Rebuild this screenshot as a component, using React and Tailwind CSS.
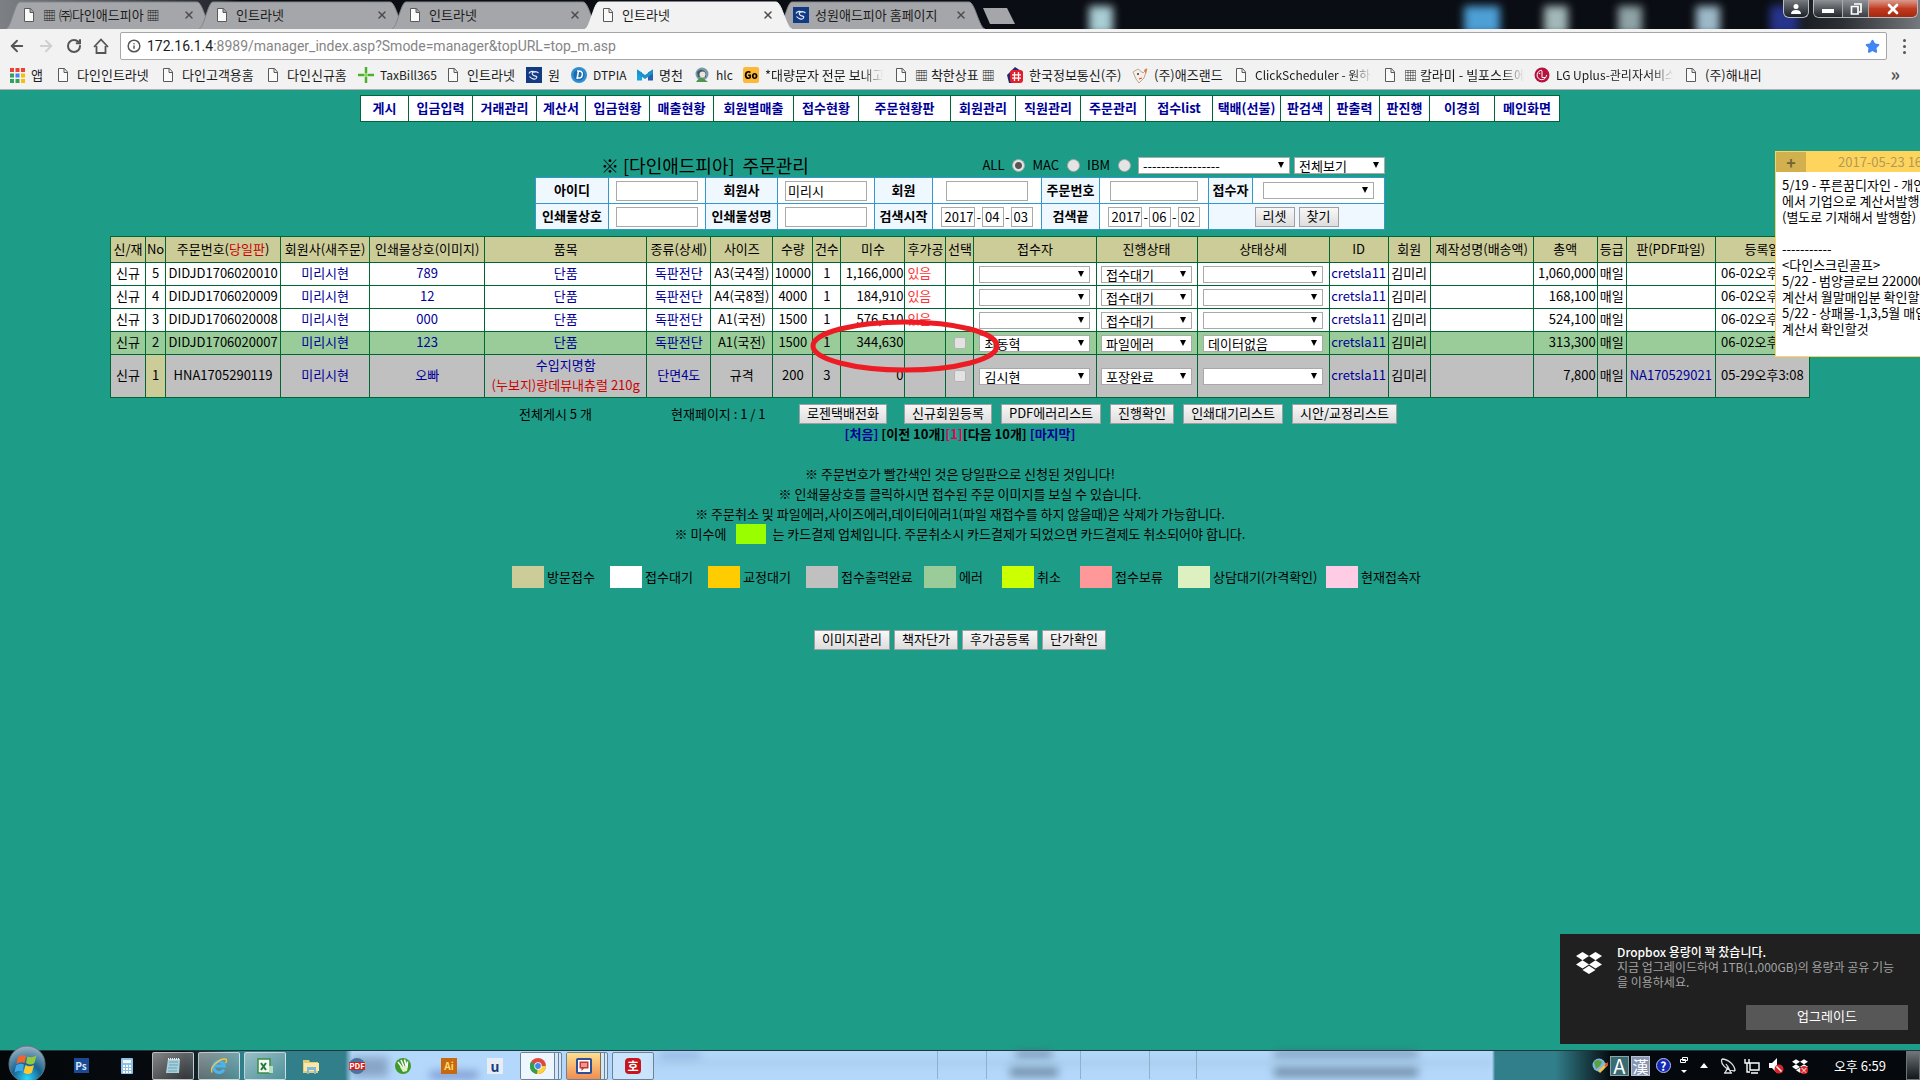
import React, { useState } from "react";
import { ArrowLeft, ArrowRight, RotateCw, Info, Star, X } from "lucide-react";
import { FaDropbox } from "react-icons/fa";

const tabs = [
  { title: '▦ ㈜다인애드피아 ▦', icon: 'doc' },
  { title: '인트라넷', icon: 'doc' },
  { title: '인트라넷', icon: 'doc' },
  { title: '인트라넷', icon: 'doc', active: true },
  { title: '성원애드피아 홈페이지', icon: 'blue' },
];

const bookmarks = [
  { title: '앱', icon: 'apps', width: 'w-[42px]' },
  { title: '다인인트라넷', icon: 'doc', width: 'w-[101px]' },
  { title: '다인고객용홈', icon: 'doc', width: 'w-[101px]' },
  { title: '다인신규홈', icon: 'doc', width: 'w-[89px]' },
  { title: 'TaxBill365', icon: 'plus', width: 'w-[83px]' },
  { title: '인트라넷', icon: 'doc', width: 'w-[77px]' },
  { title: '원', icon: 'blue', width: 'w-[41px]' },
  { title: 'DTPIA', icon: 'dt', width: 'w-[62px]' },
  { title: '명천', icon: 'm', width: 'w-[53px]' },
  { title: 'hlc', icon: 'hlc', width: 'w-[45px]' },
  { title: '*대량문자 전문 보내고', icon: 'go', width: 'w-[146px]', fade: true },
  { title: '▦ 착한상표 ▦', icon: 'doc', width: 'w-[110px]' },
  { title: '한국정보통신(주)', icon: 'hash', width: 'w-[121px]' },
  { title: '(주)애즈랜드', icon: 'az', width: 'w-[97px]' },
  { title: 'ClickScheduler - 원하는', icon: 'doc', width: 'w-[145px]', fade: true },
  { title: '▦ 칼라미 - 빌포스트에', icon: 'doc', width: 'w-[148px]', fade: true },
  { title: 'LG Uplus-관리자서비스', icon: 'lg', width: 'w-[145px]', fade: true },
  { title: '(주)해내리', icon: 'doc', width: 'w-[87px]' },
];

const menus = [
  ['게시', 'w-[48px]'], ['입금입력', 'w-[64px]'], ['거래관리', 'w-[64px]'], ['계산서', 'w-[49px]'],
  ['입금현황', 'w-[64px]'], ['매출현황', 'w-[64px]'], ['회원별매출', 'w-[80px]'], ['접수현황', 'w-[65px]'],
  ['주문현황판', 'w-[92px]'], ['회원관리', 'w-[65px]'], ['직원관리', 'w-[65px]'], ['주문관리', 'w-[65px]'],
  ['접수list', 'w-[67px]'], ['택배(선불)', 'w-[68px]'], ['판검색', 'w-[49px]'], ['판출력', 'w-[50px]'],
  ['판진행', 'w-[50px]'], ['이경희', 'w-[65px]'], ['메인화면', 'w-[65px]'],
];

const columns = [
  ['신/재', 'w-[35px]'], ['No', 'w-[20px]'], ['주문번호', 'w-[115px]'], ['회원사(새주문)', 'w-[89px]'],
  ['인쇄물상호(이미지)', 'w-[115px]'], ['품목', 'w-[162px]'], ['종류(상세)', 'w-[64px]'], ['사이즈', 'w-[62px]'],
  ['수량', 'w-[40px]'], ['건수', 'w-[28px]'], ['미수', 'w-[64px]'], ['후가공', 'w-[41px]'], ['선택', 'w-[28px]'],
  ['접수자', 'w-[122px]'], ['진행상태', 'w-[101px]'], ['상태상세', 'w-[132px]'], ['ID', 'w-[59px]'],
  ['회원', 'w-[42px]'], ['제작성명(배송액)', 'w-[103px]'], ['총액', 'w-[64px]'], ['등급', 'w-[29px]'],
  ['판(PDF파일)', 'w-[89px]'], ['등록일', 'w-[94px]'],
];

const orders = [
  { no: 5, code: 'DIDJD1706020010', name: '789', item: '단품', kind: '독판전단', size: 'A3(국4절)', qty: 10000, count: 1, due: '1,166,000', post: '있음', staff: '', state: '접수대기', detail: '', total: '1,060,000', pdf: '', date: '06-02오후6:54', bg: 'bg-white' },
  { no: 4, code: 'DIDJD1706020009', name: '12', item: '단품', kind: '독판전단', size: 'A4(국8절)', qty: 4000, count: 1, due: '184,910', post: '있음', staff: '', state: '접수대기', detail: '', total: '168,100', pdf: '', date: '06-02오후6:52', bg: 'bg-white' },
  { no: 3, code: 'DIDJD1706020008', name: '000', item: '단품', kind: '독판전단', size: 'A1(국전)', qty: 1500, count: 1, due: '576,510', post: '있음', staff: '', state: '접수대기', detail: '', total: '524,100', pdf: '', date: '06-02오후6:50', bg: 'bg-white' },
  { no: 2, code: 'DIDJD1706020007', name: '123', item: '단품', kind: '독판전단', size: 'A1(국전)', qty: 1500, count: 1, due: '344,630', post: '', check: true, staff: '최동혁', state: '파일에러', detail: '데이터없음', total: '313,300', pdf: '', date: '06-02오후6:48', bg: 'bg-[#99cc99]' },
  { no: 1, code: 'HNA1705290119', name: '오빠', item: '수입지명함', paper: '(누보지)랑데뷰내츄럴 210g', kind: '단면4도', size: '규격', qty: 200, count: 3, due: '0', post: '', check: true, staff: '김시현', state: '포장완료', detail: '', total: '7,800', pdf: 'NA170529021', date: '05-29오후3:08', bg: 'bg-[#c0c0c0]', tall: true },
];

const legend = [
  ['방문접수', 'bg-[#cccc99]', 'w-[98px]'], ['접수대기', 'bg-white', 'w-[98px]'], ['교정대기', 'bg-[#ffcc00]', 'w-[98px]'],
  ['접수출력완료', 'bg-[#c0c0c0]', 'w-[118px]'], ['에러', 'bg-[#99cc99]', 'w-[78px]'], ['취소', 'bg-[#ccff00]', 'w-[78px]'],
  ['접수보류', 'bg-[#ff9999]', 'w-[98px]'], ['상담대기(가격확인)', 'bg-[#dcf0c0]', 'w-[148px]'], ['현재접속자', 'bg-[#ffcce6]', 'w-[96px]'],
];

// 16px site icons for tabs and bookmarks
const SiteIcon = ({ name }) => {
  const shapes = {
    doc: <path d="M3.5 1.5h6l3 3.5v9.500h-9zM9 1.500v4h3.500" fill="#fafafa" stroke="#5a5a5a" />,
    apps: <g>
      <path d="M1 1h4v4H1zM6.500 1h4v4h-4zM12 1h4v4h-4z" fill="#ea4335" />
      <path d="M1 6.500h4v4H1z" fill="#34a060" /><path d="M6.500 6.500h4v4h-4z" fill="#4285f4" /><path d="M12 6.500h4v4h-4z" fill="#fbbc05" />
      <path d="M1 12h4v4H1zM6.500 12h4v4h-4z" fill="#34a060" /><path d="M12 12h4v4h-4z" fill="#fbbc05" />
    </g>,
    plus: <g><path d="M8 0v6M8 10v6M0 8h6M10 8h6" stroke="#4caf2e" strokeWidth="2.500" /><circle cx="8" cy="8" r="2" fill="#8bd45c" /></g>,
    blue: <g><rect width="16" height="16" fill="#123a82" /><path d="M12.500 6C10 3.500 5 5 6.500 7.500S12 8.500 10.500 11 5 11.500 3.500 9.500M3 6.500C4 4 8 3.500 9 5.500" fill="none" stroke="#e3ecfa" strokeWidth="1.200" /></g>,
    dt: <g><circle cx="8" cy="8" r="8" fill="#2f8fd0" /><circle cx="8" cy="8" r="5.500" fill="#1c6cb0" /><path d="M6 4h2c5 0 4 7 0 7H5.500M7.500 4 6 12" stroke="#fff" strokeWidth="1.500" fill="none" /></g>,
    m: <g><path d="M0 2.500l5 3v8H0z" fill="#17a3e0" /><path d="M11 5.500l5-3v11h-5z" fill="#2660b4" /><path d="M0 2.500l8 5.500 8-5.500v4L8 12 0 6.500z" fill="#1d92c8" /></g>,
    hlc: <g><circle cx="8" cy="7" r="6.500" fill="#7b98a8" /><path d="M3 5q5-5 9 1v4H4z" fill="#355c6e" /><circle cx="8.500" cy="7.500" r="3" fill="#f1e3cf" /><path d="M2 15q4-6 8-3l4 3z" fill="#4c9650" /></g>,
    hash: <g><path d="M8 0l8 5v8l-6 3H2L0 8z" fill="#26286e" /><rect x="3" y="3" width="13" height="13" rx="3" fill="#e2202c" /><path d="M7.500 5v9M11.500 5v9M5 7.800h9M5 11.200h9" stroke="#fff" strokeWidth="1.300" /></g>,
    az: <g><path d="M1 5l5-3 5 4 4-4-3 9-5 5-3-4z" fill="#f5efe8" stroke="#b9a896" /><path d="M12 3l3-2-1 6z" fill="#e8793a" /><circle cx="6" cy="7" r="1" fill="#333" /><path d="M7 12l3-1" stroke="#d33" /></g>,
    lg: <g><circle cx="8" cy="8" r="7.500" fill="#b5123f" /><path d="M8 4v6.500h3M12.500 8A4.700 4.700 0 1 1 8 3.300" fill="none" stroke="#fff" /><circle cx="5.500" cy="6.500" r=".8" fill="#fff" /></g>,
  };
  if (name === 'go') {
    return <span className="flex h-4 w-4 shrink-0 items-center justify-center rounded-xs bg-[#fdb933] text-[10px] leading-none font-black text-black">Go</span>;
  }
  return <svg viewBox="0 0 16 16" className="h-4 w-4 shrink-0">{shapes[name]}</svg>;
}

const Tab = ({ tab }) => (
  <div className={`relative -mr-[14px] flex h-7 w-[207px] items-center gap-1.5 pr-[18px] pl-[15px] ${tab.active ? 'z-10' : ''}`}>
    <svg viewBox="0 0 207 28" preserveAspectRatio="none" className="absolute inset-0 h-full w-full">
      <path d="M0 28C5 27 9 1 14 1H191C197 1 201 27 207 28" fill={tab.active ? '#f2f2f2' : '#a5a6a9'} stroke={tab.active ? '#f2f2f2' : '#82868c'} />
    </svg>
    <span className="relative"><SiteIcon name={tab.icon} /></span>
    <span className="relative flex-1 whitespace-nowrap">{tab.title}</span>
    <button aria-label="탭 닫기" className="relative"><X className="h-3 w-3 text-[#4d4d4d]" strokeWidth={3} /></button>
  </div>
)

const WindowButtons = () => (
  <div className="flex h-[18px] items-stretch gap-1 text-white">
    <button aria-label="사용자" className="flex w-[26px] items-center justify-center rounded-b-md border border-t-0 border-[#b9bcc0] bg-gradient-to-b from-[#777b80] to-[#1d2229]">
      <svg viewBox="0 0 12 12" className="h-3 w-3" fill="#fff"><circle cx="6" cy="3.500" r="2.500" /><path d="M1 11q0-4 5-4t5 4z" /></svg>
    </button>
    <div className="flex overflow-hidden rounded-b-md border border-t-0 border-[#b9bcc0]">
      <button aria-label="최소화" className="flex w-[29px] items-center justify-center border-r border-[#aaa] bg-gradient-to-b from-[#8f9296] to-[#23272d]"><span className="mt-1 h-1 w-3 bg-white"></span></button>
      <button aria-label="이전 크기로" className="flex w-[26px] items-center justify-center border-r border-[#aaa] bg-gradient-to-b from-[#8f9296] to-[#3b3e43]">
        <svg viewBox="0 0 12 12" className="h-3 w-3" fill="none" stroke="#fff" strokeWidth="1.700"><path d="M4 1h7v8H9" /><path d="M1.500 3.500h6.500v7.500H1.500z" /></svg>
      </button>
      <button aria-label="닫기" className="flex w-[48px] items-center justify-center bg-gradient-to-b from-[#d99b8d] via-[#c23b20] to-[#a3290f]"><X className="h-4 w-4" strokeWidth={4} /></button>
    </div>
  </div>
)

const BrowserHeader = () => (
  <header className="font-['Noto_Sans_CJK_KR',sans-serif] text-[13px] leading-4 text-[#1c1c1c]">
    {/* Tab strip over the blurred desktop */}
    <div className="relative flex h-[29px] items-start overflow-hidden bg-[linear-gradient(90deg,#7d8186_0,#24282e_220px,#0a0d13_240px,#0a0d13_92%,#2c3035_96%,#75797d)]">
      <span className="absolute top-1.5 left-[1089px] h-7 w-6 bg-[#a9cdd4] blur-xs"></span>
      <span className="absolute top-1.5 right-[420px] h-7 w-9 bg-[#4d9fd6] blur-xs"></span>
      <span className="absolute top-1.5 right-[352px] h-7 w-6 bg-[#a3b8b9] blur-xs"></span>
      <span className="absolute top-1.5 right-[278px] h-7 w-6 bg-[#8fa3a6] blur-xs"></span>
      <span className="absolute top-1.5 right-[200px] h-7 w-6 bg-[#9db9c9] blur-xs"></span>
      <span className="absolute top-1.5 right-[122px] h-7 w-7 bg-[#27348c] blur-xs"></span>
      <div className="flex pt-px pl-1.5">
        {tabs.map((tab, i) => <Tab key={i} tab={tab} />)}
      </div>
      <button aria-label="새 탭" className="mt-2 ml-3 h-4 w-8 bg-[#a5a6a9] [clip-path:polygon(0_0,75%_0,100%_100%,22%_100%)]"></button>
      <div className="relative mr-0.5 ml-auto"><WindowButtons /></div>
    </div>

    {/* Address bar */}
    <div className="flex h-[34px] items-center bg-[#f2f2f2] pr-2 pl-2 text-[#555]">
      <div className="flex w-28 items-center gap-[11px]">
        <ArrowLeft className="h-[18px] w-[18px]" strokeWidth={2.5} />
        <ArrowRight className="h-[18px] w-[18px] text-[#cfcfcf]" strokeWidth={2.5} />
        <RotateCw className="h-4 w-4" strokeWidth={3} />
        <svg viewBox="0 0 16 16" className="h-4 w-4" fill="none" stroke="#555" strokeWidth="1.800"><path d="M1 9l7-7.500L15 9M3.500 8v7h9V8" /></svg>
      </div>
      <div className="flex h-7 flex-1 items-center gap-1.5 rounded-xs border border-[#a6a6a6] bg-white px-1.5">
        <Info className="h-3.5 w-3.5 shrink-0" strokeWidth={2.5} />
        <label htmlFor="url" className="sr-only">주소</label>
        <div className="relative flex-1 font-[Roboto,sans-serif] text-sm leading-5 text-[#858585]">
          <span className="text-[#1c1c1c]">172.16.1.4</span>:8989/manager_index.asp?Smode=manager&amp;topURL=top_m.asp
          <input id="url" className="absolute inset-0 w-full bg-transparent outline-none" />
        </div>
        <Star className="h-[15px] w-[15px]" fill="#4285f4" stroke="#4285f4" />
      </div>
      <button aria-label="메뉴" className="ml-4 flex w-[9px] flex-col gap-[3px]">
        <span className="h-[3px] w-[3px] rounded-full bg-[#555]"></span>
        <span className="h-[3px] w-[3px] rounded-full bg-[#555]"></span>
        <span className="h-[3px] w-[3px] rounded-full bg-[#555]"></span>
      </button>
    </div>

    {/* Bookmarks */}
    <nav className="flex h-[27px] items-center gap-1 border-b border-[#b0b0b0] bg-[#f2f2f2] pr-5 pb-[3px] pl-[9px]">
      {bookmarks.map((b) => (
        <a key={b.title + b.width} href="#" className={`flex shrink-0 items-center gap-1.5 overflow-hidden leading-5 whitespace-nowrap ${b.width} ${b.fade ? '[mask-image:linear-gradient(90deg,#000_82%,transparent_96%)]' : ''} ${/^[A-Za-z]/.test(b.title) ? 'text-xs' : ''}`}>
          <SiteIcon name={b.icon} />
          <span>{b.title}</span>
        </a>
      ))}
      <button className="ml-auto pb-1 text-lg leading-4 font-bold text-[#555]">»</button>
    </nav>
  </header>
)

const Select = ({ label, value, width }) => (
  <span className={`relative block h-[17px] shrink-0 ${width}`}>
    <select aria-label={label} defaultValue={value} className="block h-full w-full appearance-none border border-[#a9a9a9] bg-white pl-1 text-[13px] leading-[15px] text-black outline-none">
      <option value={value}>{value}</option>
    </select>
    <svg viewBox="0 0 6 6" className="pointer-events-none absolute top-[5px] right-1.5 h-1.5 w-1.5"><path d="M0 0h6L3 6z" /></svg>
  </span>
)

const Field = ({ label, value, width }) => (
  <input aria-label={label} defaultValue={value} className={`block h-5 border border-[#a9a9a9] bg-white pl-0.5 text-[13px] leading-4 outline-none ${width}`} />
)

const Button = ({ children, className }) => (
  <button className={`h-5 shrink-0 border border-[#a0a0a0] bg-gradient-to-b from-[#f8f8f8] to-[#dddddd] pb-0.5 text-center leading-4 whitespace-nowrap text-black ${className}`}>{children}</button>
)

const DateFields = ({ label, date }) => (
  <span className="flex items-center justify-center gap-px">
    <Field label={`${label} 년`} value={date[0]} width="w-[34px]" />-
    <Field label={`${label} 월`} value={date[1]} width="w-[22px]" />-
    <Field label={`${label} 일`} value={date[2]} width="w-[22px]" />
  </span>
)

const SearchForm = () => {
  const [os, setOs] = useState('ALL');
  const th = 'h-[26px] border border-[#3399cc] bg-[#f0f8ff] p-0 pb-0.5 text-center font-bold whitespace-nowrap';
  const td = 'h-[26px] border border-[#3399cc] bg-white p-0 text-center';

  return (
    <form className="mx-auto mt-[33px] w-[850px]" onSubmit={(e) => e.preventDefault()}>
      <div className="flex h-[22px] items-center pb-0.5">
        <h1 className="flex-1 pl-[66px] text-lg leading-5 whitespace-pre">※ [다인애드피아]  주문관리</h1>
        {['ALL', 'MAC', 'IBM'].map((name) => (
          <label key={name} className="mr-[7px] flex items-center gap-2">
            {name}
            <input type="radio" name="os" checked={os === name} onChange={() => setOs(name)}
              className="h-[13px] w-[13px] appearance-none rounded-full border border-[#a5a5a5] bg-[#e4e4e4] checked:bg-[radial-gradient(#555_0_3px,#e4e4e4_4px)]" />
          </label>
        ))}
        <Select label="품목 선택" value="-----------------" width="mr-1 w-[152px]" />
        <Select label="보기" value="전체보기" width="w-[91px]" />
      </div>
      <table className="w-full table-fixed border-collapse">
        <colgroup>
          <col className="w-[73px]" /><col className="w-[97px]" /><col className="w-[72px]" /><col className="w-[97px]" />
          <col className="w-[58px]" /><col className="w-[109px]" /><col className="w-[58px]" /><col className="w-[109px]" />
          <col className="w-[44px]" /><col />
        </colgroup>
        <tbody>
          <tr>
            <th className={th}>아이디</th><td className={td}><Field label="아이디" width="mx-auto w-[82px]" /></td>
            <th className={th}>회원사</th><td className={td}><Field label="회원사" value="미리시" width="mx-auto w-[82px]" /></td>
            <th className={th}>회원</th><td className={td}><Field label="회원" width="mx-auto w-[82px]" /></td>
            <th className={th}>주문번호</th><td className={td}><Field label="주문번호" width="mx-auto w-[88px]" /></td>
            <th className={th}>접수자</th><td className={td}><Select label="접수자" value="" width="mx-auto w-[111px]" /></td>
          </tr>
          <tr>
            <th className={th}>인쇄물상호</th><td className={td}><Field label="인쇄물상호" width="mx-auto w-[82px]" /></td>
            <th className={th}>인쇄물성명</th><td className={td}><Field label="인쇄물성명" width="mx-auto w-[82px]" /></td>
            <th className={th}>검색시작</th><td className={td}><DateFields label="검색시작" date={['2017', '04', '03']} /></td>
            <th className={th}>검색끝</th><td className={td}><DateFields label="검색끝" date={['2017', '06', '02']} /></td>
            <td colSpan={2} className="border border-[#3399cc] bg-[#f0f8ff] p-0">
              <div className="flex justify-center gap-1"><Button className="w-10">리셋</Button><Button className="w-10">찾기</Button></div>
            </td>
          </tr>
        </tbody>
      </table>
    </form>
  )
}

const OrderTable = () => {
  const cell = 'border border-[#006633] p-0 pb-0.5 text-center whitespace-nowrap';
  const control = 'border border-[#006633] p-0';
  const link = 'text-[#000099]';

  return (
    <div className="relative mx-auto mt-1.5 w-[1700px]">
      <table className="w-full table-fixed border-collapse">
        <thead>
          <tr className="h-[26px] bg-[#cccc99]">
            {columns.map(([name, width]) => (
              <th key={name} className={`${cell} ${width} font-normal`}>
                {name}{name === '주문번호' && <>(<span className="text-[#cc0000]">당일판</span>)</>}
              </th>
            ))}
          </tr>
        </thead>
        <tbody>
          {orders.map((o) => (
            <tr key={o.no} className={`${o.bg} ${o.tall ? 'h-[43px]' : 'h-[23px]'}`}>
              <td className={cell}>신규</td>
              <td className={`${cell} ${o.tall ? 'bg-[#cccc99]' : ''}`}>{o.no}</td>
              <td className={cell}>{o.code}</td>
              <td className={cell}><a href="#" className={link}>미리시현</a></td>
              <td className={cell}><a href="#" className={link}>{o.name}</a></td>
              <td className={`${cell} leading-5`}>
                <a href="#" className={link}>{o.item}</a>
                {o.paper && <div className="text-[#cc0000]">{o.paper}</div>}
              </td>
              <td className={cell}><a href="#" className={link}>{o.kind}</a></td>
              <td className={cell}>{o.size}</td>
              <td className={cell}>{o.qty}</td>
              <td className={cell}>{o.count}</td>
              <td className="border border-[#006633] pr-px pb-0.5 text-right">{o.due}</td>
              <td className="border border-[#006633] pb-0.5 pl-0.5 text-left text-[#ff3333]">{o.post}</td>
              <td className={control}>
                {o.check && <input type="checkbox" aria-label={`${o.no}번 선택`} className="mx-auto block h-3 w-3 appearance-none rounded-xs border border-[#b5b5b5] bg-[#e2e2e2]" />}
              </td>
              <td className={control}><Select label="접수자" value={o.staff} width="mx-auto w-[111px]" /></td>
              <td className={control}><Select label="진행상태" value={o.state} width="mx-auto w-[91px]" /></td>
              <td className={control}><Select label="상태상세" value={o.detail} width="mx-auto w-[120px]" /></td>
              <td className={cell}><a href="#" className={link}>cretsla11</a></td>
              <td className={cell}>김미리</td>
              <td className={cell}></td>
              <td className="border border-[#006633] pr-px pb-0.5 text-right">{o.total}</td>
              <td className={cell}>매일</td>
              <td className={cell}><a href="#" className={link}>{o.pdf}</a></td>
              <td className={cell}>{o.date}</td>
            </tr>
          ))}
        </tbody>
      </table>
      {/* Red marker drawn round the unpaid amount */}
      <svg viewBox="0 0 190 54" className="pointer-events-none absolute top-[83px] left-[700px] h-[54px] w-[190px]">
        <ellipse cx="95" cy="27" rx="92" ry="24" fill="none" stroke="#ed1c24" strokeWidth="5" />
      </svg>
    </div>
  )
}

const Memo = () => (
  <aside className="absolute top-[151px] right-0 h-[206px] w-[145px] overflow-hidden border border-r-0 border-[#ffd45c] bg-white">
    <div className="flex h-5 items-center bg-[#ffd45c] whitespace-nowrap text-[#b09a58]">
      <button aria-label="메모 추가" className="mr-8 flex h-5 w-[30px] shrink-0 items-center justify-center bg-[#d1b04d] text-base font-bold text-[#6f6339]">+</button>
      2017-05-23 16:22
    </div>
    <p className="px-1.5 pt-[5px] whitespace-pre">{`5/19 - 푸른꿈디자인 - 개인
에서 기업으로 계산서발행
(별도로 기재해서 발행함)

-----------
<다인스크린골프>
5/22 - 범양글로브 220000
계산서 월말매입분 확인할
5/22 - 상패몰-1,3,5월 매입
계산서 확인할것`}</p>
  </aside>
)

const DropboxToast = () => (
  <aside className="absolute right-0 bottom-9 flex h-[110px] w-[360px] bg-[#202020] pt-2.5 text-xs leading-[15px]">
    <FaDropbox className="mt-1.5 mr-[15px] ml-4 h-[26px] w-[26px] shrink-0 text-white" />
    <div className="flex flex-1 flex-col">
      <b className="font-medium text-white">Dropbox 용량이 꽉 찼습니다.</b>
      <p className="whitespace-nowrap text-[#a3a3a3]">지금 업그레이드하여 1TB(1,000GB)의 용량과 공유 기능<br />을 이용하세요.</p>
      <button className="mt-4 mr-3 h-[25px] w-[162px] self-end bg-[#575757] pb-1 text-[13px] text-white">업그레이드</button>
    </div>
  </aside>
)

const TaskIcon = ({ name }) => {
  const icons = {
    calc: <g><rect x="2" width="12" height="16" rx="1" fill="#8fc1e6" /><path d="M4 2h8v3H4z" fill="#eef8ff" /><path d="M4 8h8M4 11h8M4 14h8" stroke="#fff" strokeWidth="2" strokeDasharray="2 1" /></g>,
    note: <g><path d="M3 1h12l-1 14H1z" fill="#a9d2de" /><path d="M4 4h9M4 7h9M3 10h9M3 13h9" stroke="#6d9fb0" /><path d="M3 1h12" stroke="#eee" strokeWidth="2" strokeDasharray="1 1" /></g>,
    ie: <g fill="none"><path d="M13 11.500A5.500 5.500 0 1 1 13.500 8H4" stroke="#49b4ee" strokeWidth="3" /><path d="M1 14.500C-2 9 10-1 15.500 1.500 16 2 15.500 4 14.500 5" stroke="#f4c63f" strokeWidth="1.500" /></g>,
    excel: <g><rect x="1" y="1" width="12" height="14" fill="#f2faf2" stroke="#3b8d45" strokeWidth="1.500" /><path d="M4 5l5 7M9 5l-5 7" stroke="#217a36" strokeWidth="2" /><path d="M12 8h4v7h-4z" fill="#b7dfb9" /></g>,
    folder: <g><path d="M0 2h6l1 2h8v11H0z" fill="#e8cb6e" /><path d="M1 5h15v8H1z" fill="#f8e9a8" /><path d="M4 16V9h9v7h-2v-4H6v4z" fill="#7db9e2" /></g>,
    corel: <g><circle cx="8" cy="8" r="8" fill="#3f9a2c" /><path d="M3 4l6 8M6 2l4 9M9.500 1.500l2 8M12.500 3.500l-.5 6" stroke="#fff" strokeWidth="1.600" /><path d="M5 9l3 5 4-1 1-5z" fill="#dff3c9" /></g>,
    chrome: <g><circle cx="8" cy="8" r="8" fill="#dd4b3e" /><path d="M8 8L1 4a8 8 0 0 0 6 12z" fill="#2ea14f" /><path d="M8 8h8a8 8 0 0 1-9 8z" fill="#fdd23c" /><circle cx="8" cy="8" r="3.700" fill="#fff" /><circle cx="8" cy="8" r="2.900" fill="#4285f4" /></g>,
    chat: <g><rect width="16" height="16" rx="2" fill="#2c4f9c" /><path d="M2 2h12v12H2z" fill="#fff" /><path d="M3.500 3.500h9v7H8l-2.500 2.500v-2.500h-2z" fill="#c9392e" /><path d="M5 6h6M5 8h6" stroke="#fff" /></g>,
  };
  return <svg viewBox="0 0 16 16" className="h-4 w-4">{icons[name]}</svg>;
}

const Taskbar = () => {
  const slot = 'flex h-7 w-[42px] shrink-0 items-center justify-center';
  const open = `${slot} rounded-xs border border-white/60 bg-gradient-to-br from-white/50 to-white/15`;

  return (
    <footer className="relative flex h-[30px] items-center border-t border-[#20363a] bg-[linear-gradient(90deg,#04070a_0,#070b0f_185px,#317f8b_240px,#317f8b_345px,#b4d8fb_352px,#b4d8fb_1492px,#317f8b_1495px,#317f8b_1555px,#05080c_1612px,#05080c)]">
      {/* Window seen through the glass */}
      <span className="absolute top-1.5 left-[352px] h-5 w-9 bg-[#6c83a5]/60 blur-xs"></span>
      <span className="absolute top-5 left-[430px] h-2 w-12 bg-[#5872b5]/60 blur-xs"></span>
      <span className="absolute top-0.5 left-[660px] h-1 w-10 bg-[#5a78b5]/60 blur-xs"></span>
      <span className="absolute top-0 left-[1016px] h-1.5 w-9 bg-[#476078]/70 blur-xs"></span>
      <span className="absolute top-4 left-[1010px] h-2.5 w-12 bg-[#476078]/60 blur-xs"></span>
      <span className="absolute top-0 left-[1274px] h-1.5 w-36 bg-[#476078]/60 blur-xs"></span>
      <span className="absolute top-4 left-[1274px] h-2.5 w-36 bg-[#476078]/60 blur-xs"></span>
      <span className="absolute top-2.5 left-[652px] h-1 w-[840px] bg-[#8fb9cf]/60 blur-xs"></span>
      <span className="absolute top-0 left-[937px] h-7 w-[50px] border-x border-[#8ab5c8]"></span>
      <span className="absolute top-0 left-[1080px] h-7 w-[70px] border-x border-[#8ab5c8]"></span>
      <span className="absolute top-0 left-[1196px] h-7 w-px bg-[#8ab5c8]"></span>

      <button aria-label="시작" className="relative -mt-1 mr-3.5 ml-2 h-[38px] w-[38px] shrink-0">
        <svg viewBox="0 0 38 38">
          <defs><radialGradient id="orb" cx=".5" cy=".9" r=".9"><stop offset="0" stopColor="#2bd6ff" /><stop offset=".45" stopColor="#17628f" /><stop offset="1" stopColor="#9fb5c2" /></radialGradient></defs>
          <circle cx="19" cy="19" r="18" fill="url(#orb)" stroke="#5d7484" />
          <path d="M10 12q4-3 8-1l-1.500 7q-4-2-8 1z" fill="#f0652e" /><path d="M19.500 11.500q4 2 9-1l-2 7.500q-4 3-8.500 0z" fill="#94c83d" />
          <path d="M8 20.500q4-3 8-1l-1.500 7q-4-2-8 1z" fill="#3fa9e8" /><path d="M17.500 20q4 2.500 8.500 0l-2 7.500q-4 3-8.500 0z" fill="#fdc72f" />
        </svg>
      </button>
      <div className="relative flex gap-1 text-[10px] leading-none font-bold">
        <button className={slot}><span className="flex h-[15px] w-[15px] items-center justify-center bg-[#1b4a94] text-[#d4e9ff]">Ps</span></button>
        <button className={slot} aria-label="계산기"><TaskIcon name="calc" /></button>
        <button className={open} aria-label="메모장"><TaskIcon name="note" /></button>
        <button className={open} aria-label="인터넷"><TaskIcon name="ie" /></button>
        <button className={open} aria-label="엑셀"><TaskIcon name="excel" /></button>
        <button className={slot} aria-label="탐색기"><TaskIcon name="folder" /></button>
        <button className={slot}><span className="flex h-4 w-4 items-center justify-center rounded-full bg-[#47739c] text-[8px] text-white"><span className="bg-[#cf2222]">PDF</span></span></button>
        <button className={slot} aria-label="코렐"><TaskIcon name="corel" /></button>
        <button className={slot}><span className="flex h-4 w-4 items-center justify-center bg-[#c8690e] text-[#ffdb70]">Ai</span></button>
        <button className={slot}><span className="flex h-4 w-4 items-center justify-center bg-[#e7edf5] text-sm leading-none text-[#1c3d7a]">u</span></button>
        <button aria-label="크롬" className="flex h-7 w-[42px] rounded-xs border border-[#6c8298] bg-white/40"><span className="flex h-full w-[34px] items-center justify-center border-r border-[#6c8298] bg-white/60"><TaskIcon name="chrome" /></span><span className="h-full w-1 border-r border-[#6c8298]"></span></button>
        <button aria-label="메신저" className="flex h-7 w-[42px] rounded-xs border border-[#6c8298] bg-white/40"><span className="flex h-full w-[34px] items-center justify-center border-r border-[#8b6a48] bg-gradient-to-b from-[#fbe08e] to-[#f08c50]"><TaskIcon name="chat" /></span><span className="h-full w-1 border-r border-[#6c8298]"></span></button>
        <button className="flex h-7 w-[42px] items-center justify-center rounded-xs border border-[#6c8298] bg-white/30"><span className="flex h-4 w-4 items-center justify-center rounded-sm bg-[#c5161d] text-xs leading-none text-white">호</span></button>
      </div>

      {/* Tray */}
      <div className="relative ml-auto flex h-full items-center text-white">
        <svg viewBox="0 0 16 16" className="mr-0.5 h-4 w-4"><circle cx="7" cy="7" r="6.500" fill="#7db7dd" /><path d="M2 4q4-4 8 0l-2 4-4 3z" fill="#5aa33f" /><path d="M7 14l8-8" stroke="#f0c14b" strokeWidth="3" /><path d="M13 8l3-3" stroke="#e34b31" strokeWidth="2" /></svg>
        <span className="mr-0.5 flex h-5 w-[19px] items-center justify-center border border-white/40 bg-[#3a6a72] text-xl leading-none">A</span>
        <span className="mr-1.5 flex h-5 w-[19px] items-center justify-center border border-white/40 bg-[#8796b3] text-base leading-none">漢</span>
        <span className="mr-2 flex h-[15px] w-[15px] items-center justify-center rounded-full border border-[#b9c4ee] bg-[#1529b8] text-xs leading-none font-bold">?</span>
        <svg viewBox="0 0 10 20" className="mr-[11px] h-5 w-2.5" fill="none" stroke="#fff"><path d="M3.500 1.500h5v3h-5zM1.500 3.500h5v3h-5z" /><path d="M2 14h6l-3 3z" fill="#fff" stroke="none" /></svg>
        <svg viewBox="0 0 8 5" className="mr-3 h-[5px] w-2" fill="#fff"><path d="M4 0l4 5H0z" /></svg>
        <svg viewBox="0 0 16 16" className="mr-2 h-4 w-4" fill="none" stroke="#ddd" strokeWidth="1.300"><path d="M2 1c-2 4 3 11 13 12M2 1c6 0 13 6 13 12M6 6l2 3M5 15l3-6 3 6M4 15h8" /></svg>
        <svg viewBox="0 0 16 16" className="mr-2 h-4 w-4" fill="none" stroke="#fff" strokeWidth="1.400"><path d="M6 5h9v7H6zM7 15h7M1 1v4h4V1M3 5v9h3" /></svg>
        <svg viewBox="0 0 16 16" className="mr-2 h-4 w-4"><path d="M1 5h3l5-5v15l-5-5H1z" fill="#fff" /><circle cx="11" cy="11" r="4.500" fill="#d9262c" /><path d="M8.500 8.500l5 5" stroke="#fff" strokeWidth="1.500" /></svg>
        <span className="relative mr-[26px]"><FaDropbox className="h-4 w-4" /><span className="absolute right-0 bottom-0 flex h-2 w-2 items-center justify-center rounded-full bg-[#d9262c] text-[8px] leading-none">×</span></span>
        <span className="mr-5 text-[13px] leading-4">오후 6:59</span>
        <button aria-label="바탕 화면 보기" className="h-full w-[14px] border border-[#6d7377] bg-gradient-to-b from-[#6f7579] to-[#14181b]"></button>
      </div>
    </footer>
  )
}

const App = () => {
  return (
    <div className="relative flex min-h-screen flex-col overflow-hidden bg-[#1d9d88] font-['Noto_Sans_CJK_KR',sans-serif] text-[13px] leading-4 text-black">
      <BrowserHeader />
      <main className="flex-1 pt-[5px]">
        {/* Top menu */}
        <table className="mx-auto w-[1200px] table-fixed border-collapse">
          <tbody>
            <tr className="h-[26px]">
              {menus.map(([name, width]) => (
                <td key={name} className={`border border-[#006633] bg-white p-0 pb-0.5 text-center font-bold whitespace-nowrap text-[#000099] ${width}`}><a href="#">{name}</a></td>
              ))}
            </tr>
          </tbody>
        </table>

        <SearchForm />
        <OrderTable />

        {/* Paging and actions */}
        <div className="mx-auto mt-1.5 flex w-[882px] items-center">
          <span className="w-[152px]">전체게시 5 개</span>
          <span className="w-[128px]">현재페이지 : 1 / 1</span>
          <div className="flex gap-[9px]">
            <Button className="mr-2 w-[88px]">로젠택배전화</Button>
            <Button className="w-[88px]">신규회원등록</Button>
            <Button className="w-[100px]">PDF에러리스트</Button>
            <Button className="w-[64px]">진행확인</Button>
            <Button className="w-[100px]">인쇄대기리스트</Button>
            <Button className="w-[105px]">시안/교정리스트</Button>
          </div>
        </div>
        <p className="text-center leading-5 font-bold">
          <a href="#" className="text-[#000099]">[처음]</a> [이전 10개]<span className="text-[#e6005c]">[1]</span>[다음 10개] <a href="#" className="text-[#000099]">[마지막]</a>
        </p>

        <div className="mt-5 text-center leading-5">
          <p>※ 주문번호가 빨간색인 것은 당일판으로 신청된 것입니다!</p>
          <p>※ 인쇄물상호를 클릭하시면 접수된 주문 이미지를 보실 수 있습니다.</p>
          <p>※ 주문취소 및 파일에러,사이즈에러,데이터에러1(파일 재접수를 하지 않을때)은 삭제가 가능합니다.</p>
          <p className="flex justify-center">※ 미수에<span className="mr-1.5 ml-2.5 h-5 w-[30px] bg-[#99ff00]"></span>는 카드결제 업체입니다. 주문취소시 카드결제가 되었으면 카드결제도 취소되어야 합니다.</p>
        </div>

        <div className="mx-auto mt-[22px] flex w-[924px] pl-[14px]">
          {legend.map(([name, color, width]) => (
            <div key={name} className={`flex shrink-0 items-center gap-[3px] whitespace-nowrap ${width}`}>
              <span className={`h-[22px] w-8 shrink-0 ${color}`}></span>{name}
            </div>
          ))}
        </div>

        <div className="mt-[42px] flex justify-center gap-1">
          <Button className="w-[76px]">이미지관리</Button>
          <Button className="w-[64px]">책자단가</Button>
          <Button className="w-[76px]">후가공등록</Button>
          <Button className="w-[64px]">단가확인</Button>
        </div>
      </main>
      <Memo />
      <DropboxToast />
      <Taskbar />
    </div>
  )
}

export default App;
